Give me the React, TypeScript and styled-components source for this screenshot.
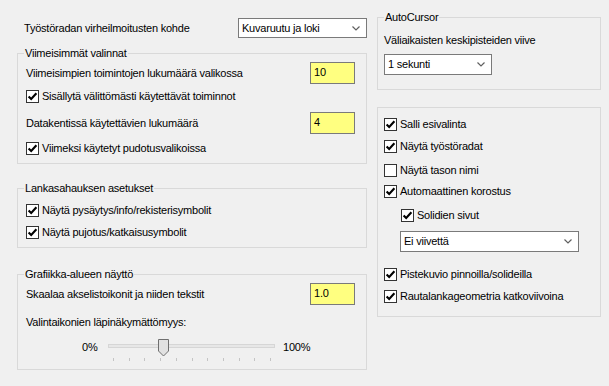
import React from "react";
import styled, { createGlobalStyle } from "styled-components";

const GlobalStyle = createGlobalStyle`
  html, body {
    margin: 0;
    padding: 0;
    background: #f0f0f0;
  }
  body {
    font-family: "Liberation Sans", Arial, sans-serif;
    font-size: 11px;
    color: #000;
  }
`;

const Window = styled.div`
  width: 609px;
  height: 386px;
  box-sizing: border-box;
  padding-left: 17px;
  display: flex;
  gap: 10px;
  overflow: hidden;
  letter-spacing: -0.22px;
  line-height: 13px;
`;

const Column = styled.div<{ $width: number; $top: number }>`
  width: ${(p) => p.$width}px;
  padding-top: ${(p) => p.$top}px;
  display: flex;
  flex-direction: column;
`;

const TopRow = styled.div`
  display: flex;
  align-items: center;
  height: 20px;
  padding-left: 7px;
`;

const Group = styled.fieldset<{ $mt: number }>`
  margin: ${(p) => p.$mt}px 0 0;
  padding: 0;
  border: 1px solid #d9d9d9;
  min-width: 0;
`;

const Legend = styled.legend`
  margin-left: 6px;
  padding: 0 1px;
  line-height: 13px;
`;

const Body = styled.div<{ $pb: number; $pad: number }>`
  display: flex;
  flex-direction: column;
  padding: 0 0 ${(p) => p.$pb}px ${(p) => p.$pad}px;
`;

const Row = styled.div<{ $h?: number; $mt?: number; $indent?: number }>`
  display: flex;
  align-items: center;
  height: ${(p) => p.$h ?? 16}px;
  margin-top: ${(p) => p.$mt ?? 0}px;
  padding-left: ${(p) => p.$indent ?? 0}px;
  white-space: nowrap;
`;

const Field = styled.div`
  margin-left: auto;
  margin-right: 11px;
  width: 45px;
  height: 22px;
  box-sizing: border-box;
  border: 1px solid #7a7a7a;
  background: #ffff80;
  padding: 3px 3px 0;
`;

const SelectBox = styled.div<{ $w: number; $h: number; $auto?: boolean }>`
  width: ${(p) => p.$w}px;
  height: ${(p) => p.$h}px;
  margin-left: ${(p) => (p.$auto ? "auto" : "0")};
  box-sizing: border-box;
  border: 1px solid #7a7a7a;
  background: #fff;
  display: flex;
  align-items: center;
  padding: 0 6px 0 3px;
  flex: none;
`;

const Chevron = styled.svg`
  margin-left: auto;
  flex: none;
`;

const Box = styled.span`
  width: 13px;
  height: 13px;
  box-sizing: border-box;
  border: 1px solid #333;
  background: #fff;
  display: inline-flex;
  align-items: center;
  justify-content: center;
  margin-right: 3px;
  flex: none;
`;

const SliderRow = styled.div`
  display: flex;
  align-items: flex-start;
  height: 26px;
  margin-top: 7px;
  padding-left: 56px;
`;

const SliderLabel = styled.span<{ $w: number; $ml?: number }>`
  width: ${(p) => p.$w}px;
  margin-top: 4px;
  margin-left: ${(p) => p.$ml ?? 0}px;
  flex: none;
`;

const Select = ({ w, h, text, auto }: { w: number; h: number; text: string; auto?: boolean }) => (
  <SelectBox $w={w} $h={h} $auto={auto}>
    <span>{text}</span>
    <Chevron width="8" height="5" viewBox="0 0 8 5">
      <path d="M0.5 0.5 L4 4 L7.5 0.5" fill="none" stroke="#606060" strokeWidth="1.2" />
    </Chevron>
  </SelectBox>
);

const Check = ({
  label,
  checked = true,
  mt,
  indent,
}: {
  label: string;
  checked?: boolean;
  mt?: number;
  indent?: number;
}) => (
  <Row $mt={mt} $indent={indent}>
    <Box>
      {checked && (
        <svg width="11" height="11" viewBox="0 0 11 11">
          <path d="M1.6 5.4 L4.2 8 L9.4 2.2" fill="none" stroke="#000" strokeWidth="2.1" />
        </svg>
      )}
    </Box>
    <span>{label}</span>
  </Row>
);

const ticks = Array.from({ length: 11 }, (_, i) => 9 + i * 15.7);

const Slider = () => (
  <svg width="175" height="26" viewBox="0 0 175 26" style={{ flex: "none" }}>
    <rect x="4.5" y="7.5" width="166" height="3" fill="#e7e7e7" stroke="#d6d6d6" />
    {ticks.map((x) => (
      <line key={x} x1={Math.round(x) + 0.5} x2={Math.round(x) + 0.5} y1="21" y2="24" stroke="#c4c4c4" />
    ))}
    <path d="M54.5 2.5 H64.5 V14 L59.5 19 L54.5 14 Z" fill="#e1e1e1" stroke="#6f6f6f" />
  </svg>
);

export default function App() {
  return (
    <>
      <GlobalStyle />
      <Window>
        <Column $width={350} $top={18}>
          <TopRow>
            <span>Työstöradan virheilmoitusten kohde</span>
            <Select w={129} h={20} text="Kuvaruutu ja loki" auto />
          </TopRow>

          <Group $mt={9}>
            <Legend>Viimeisimmät valinnat</Legend>
            <Body $pad={8} $pb={7}>
              <Row $h={22} $mt={2}>
                <span>Viimeisimpien toimintojen lukumäärä valikossa</span>
                <Field>10</Field>
              </Row>
              <Check mt={4} label="Sisällytä välittömästi käytettävät toiminnot" />
              <Row $h={22} $mt={8}>
                <span>Datakentissä käytettävien lukumäärä</span>
                <Field>4</Field>
              </Row>
              <Check mt={6} label="Viimeksi käytetyt pudotusvalikoissa" />
            </Body>
          </Group>

          <Group $mt={18}>
            <Legend>Lankasahauksen asetukset</Legend>
            <Body $pad={8} $pb={7}>
              <Check mt={7} label="Näytä pysäytys/info/rekisterisymbolit" />
              <Check mt={6} label="Näytä pujotus/katkaisusymbolit" />
            </Body>
          </Group>

          <Group $mt={20}>
            <Legend>Grafiikka-alueen näyttö</Legend>
            <Body $pad={8} $pb={6}>
              <Row $h={22} $mt={2}>
                <span>Skaalaa akselistoikonit ja niiden tekstit</span>
                <Field>1.0</Field>
              </Row>
              <Row $mt={9}>
                <span>Valintaikonien läpinäkymättömyys:</span>
              </Row>
              <SliderRow>
                <SliderLabel $w={22}>0%</SliderLabel>
                <Slider />
                <SliderLabel $w={30} $ml={4}>
                  100%
                </SliderLabel>
              </SliderRow>
            </Body>
          </Group>
        </Column>

        <Column $width={224} $top={11}>
          <Group $mt={0}>
            <Legend>AutoCursor</Legend>
            <Body $pad={6} $pb={14}>
              <Row $mt={8}>
                <span>Väliaikaisten keskipisteiden viive</span>
              </Row>
              <Row $h={21} $mt={6}>
                <Select w={108} h={21} text="1 sekunti" />
              </Row>
            </Body>
          </Group>

          <Group $mt={17}>
            <Body $pad={6} $pb={12}>
              <Check mt={8} label="Salli esivalinta" />
              <Check mt={6} label="Näytä työstöradat" />
              <Check mt={8} checked={false} label="Näytä tason nimi" />
              <Check mt={5} label="Automaattinen korostus" />
              <Check mt={8} indent={17} label="Solidien sivut" />
              <Row $h={21} $mt={8} $indent={16}>
                <Select w={179} h={21} text="Ei viivettä" />
              </Row>
              <Check mt={14} label="Pistekuvio pinnoilla/solideilla" />
              <Check mt={6} label="Rautalankageometria katkoviivoina" />
            </Body>
          </Group>
        </Column>
      </Window>
    </>
  );
}
